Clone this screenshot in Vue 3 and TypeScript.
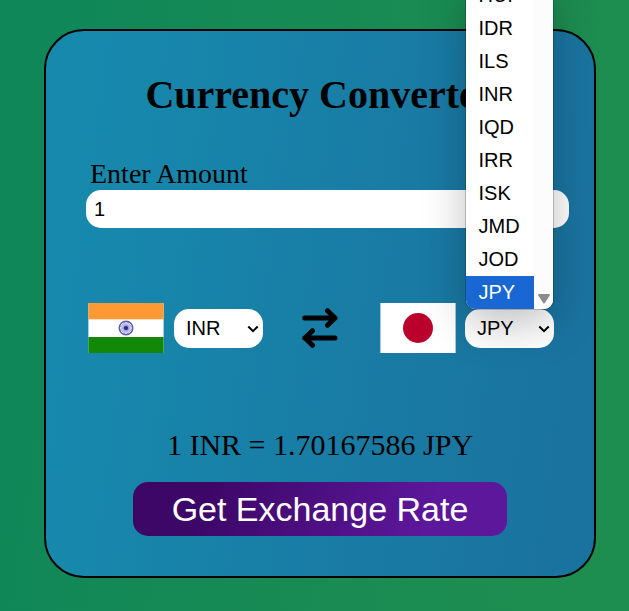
<script setup lang="ts">
import { ref } from 'vue'

const amount = ref('1')
const from = ref('INR')
const to = ref('JPY')
const rate = ref('1.70167586')
const codes: string[] = ['HUF', 'IDR', 'ILS', 'INR', 'IQD', 'IRR', 'ISK', 'JMD', 'JOD', 'JPY']
const spokes: number[] = Array.from({ length: 12 }, (_, i) => i * 15)
</script>

<template>
  <main class="page">
    <section class="card">
      <h1 class="title">Currency Converter</h1>
      <label class="label" for="amount">Enter Amount</label>
      <input id="amount" v-model="amount" class="amount" type="text" />
      <div class="row">
        <svg class="flag" viewBox="0 0 76 50">
          <rect x=".4" width="75.2" height="50" fill="#fff" />
          <rect x=".4" width="75.2" height="16.3" fill="#ff9933" />
          <rect x=".4" y="34" width="75.2" height="16" fill="#138808" />
          <g fill="none" stroke="#5a5ab5">
            <circle cx="38" cy="25" r="6.8" stroke-width="1.4" />
            <path v-for="a in spokes" :key="a" d="M38 18.5V31.5" stroke-width=".45" :transform="`rotate(${a} 38 25)`" />
          </g>
          <circle cx="38" cy="25" r="2.1" fill="#29299b" />
        </svg>
        <button class="select from" type="button">
          <span>{{ from }}</span>
          <svg class="chevron" viewBox="0 0 12 8"><path d="M1.3 1.5 6 6.2l4.7-4.7" /></svg>
        </button>
        <svg class="swap" viewBox="0 0 36 40">
          <path d="M2.700 10H33M25.500 2.700l7.500 7.300-7.500 7.300M33 30H2.700M10.500 22.700l-7.500 7.300 7.500 7.300" />
        </svg>
        <svg class="flag" viewBox="0 0 76 50">
          <rect x=".4" width="75.2" height="50" fill="#fff" />
          <circle cx="38" cy="25" r="15" fill="#bc002d" />
        </svg>
        <div class="picker">
          <button class="select" type="button">
            <span>{{ to }}</span>
            <svg class="chevron" viewBox="0 0 12 8"><path d="M1.3 1.5 6 6.2l4.7-4.7" /></svg>
          </button>
          <div class="menu">
            <ul class="options">
              <li v-for="c in codes" :key="c" :class="{ active: c === to }">{{ c }}</li>
            </ul>
            <div class="track">
              <svg class="arrow" viewBox="0 0 12 10"><path d="M1 1h10L6 8.600Z" /></svg>
            </div>
          </div>
        </div>
      </div>
      <p class="result">1 {{ from }} = {{ rate }} {{ to }}</p>
      <button class="submit" type="button">Get Exchange Rate</button>
    </section>
  </main>
</template>

<style>
body {
  margin: 0;
  overflow: hidden;
}
</style>

<style scoped>
.page {
  box-sizing: border-box;
  width: 629px;
  height: 611px;
  padding: 29px 33px 33px 44px;
  overflow: hidden;
  background: linear-gradient(98deg, #0f8759 5%, #1e8d50 85%);
  font-family: "Liberation Serif", "Times New Roman", serif;
  color: #000;
}
.card {
  box-sizing: border-box;
  width: 552px;
  height: 549px;
  padding: 40px 25px 40px 40px;
  border: 2px solid #000;
  border-radius: 40px;
  background: linear-gradient(98deg, #1789ad 9%, #1a739f 91%);
  display: flex;
  flex-direction: column;
  align-items: flex-start;
}
.title {
  align-self: center;
  margin: 0 15px 0 0;
  font-size: 40px;
  line-height: 48px;
  white-space: nowrap;
}
.label {
  margin: 39px 0 1px 4px;
  font-size: 28px;
  line-height: 31px;
}
.amount {
  box-sizing: border-box;
  width: 483px;
  height: 38px;
  padding: 0 8px;
  border: 0;
  border-radius: 15px;
  background: #fff;
  font: 20px "Liberation Sans", Arial, sans-serif;
}
.row {
  display: flex;
  align-items: center;
  height: 50px;
  margin: 75px 0 0 2px;
}
.flag {
  width: 76px;
  height: 50px;
}
.select {
  box-sizing: border-box;
  display: flex;
  align-items: center;
  justify-content: space-between;
  width: 89px;
  height: 39px;
  padding: 0 4px 1px 12px;
  border: 0;
  border-radius: 15px;
  background: #fff;
  color: #000;
  font: 20px "Liberation Sans", Arial, sans-serif;
}
.from {
  margin: 1px 39px 0 10px;
}
.chevron {
  width: 12px;
  height: 8px;
  margin-top: 2px;
  fill: none;
  stroke: #000;
  stroke-width: 2;
}
.swap {
  width: 36px;
  height: 40px;
  margin-right: 42px;
  fill: none;
  stroke: #000;
  stroke-width: 5;
  stroke-linecap: round;
  stroke-linejoin: round;
}
.picker {
  position: relative;
  margin: 1px 0 0 9px;
}
.menu {
  position: absolute;
  left: 1px;
  bottom: 39px;
  display: flex;
  width: 87px;
  overflow: hidden;
  border-radius: 0 0 9px 9px;
  background: #fff;
  box-shadow: 0 0 0 1px rgb(0 0 0 / 20%), 0 14px 44px rgb(0 0 0 / 26%);
  font: 20px/33px "Liberation Sans", Arial, sans-serif;
}
.options {
  width: 68px;
  margin: 0;
  padding: 0;
  list-style: none;
}
.options li {
  height: 33px;
  padding-left: 12.5px;
  line-height: 32px;
}
.options .active {
  background: #1967d2;
  color: #fff;
}
.track {
  display: flex;
  align-items: flex-end;
  justify-content: center;
  width: 19px;
  background: #fcfcfc;
}
.arrow {
  width: 12px;
  height: 10px;
  margin-bottom: 5px;
  fill: #8b8b8b;
  stroke: #8b8b8b;
  stroke-width: 1.8;
  stroke-linejoin: round;
}
.result {
  align-self: center;
  margin: 75px 15px 0 0;
  font-size: 30px;
  line-height: 33px;
  white-space: nowrap;
}
.submit {
  width: 374px;
  height: 54px;
  margin: 21px 0 0 47px;
  padding: 0;
  border: 0;
  border-radius: 15px;
  background: linear-gradient(109.6deg, #3d0768 20%, #5c179a 78%);
  color: #fff;
  font: 34px "Liberation Sans", Arial, sans-serif;
}
</style>
